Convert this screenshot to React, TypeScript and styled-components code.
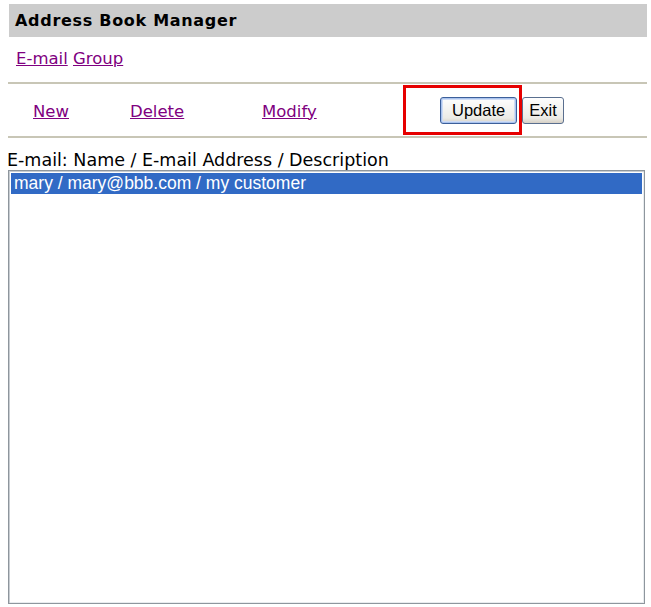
import React from "react";
import styled, { createGlobalStyle } from "styled-components";

const GlobalStyle = createGlobalStyle`
  html, body {
    margin: 0;
    padding: 0;
    background: #ffffff;
  }
  body {
    font-family: "DejaVu Sans", Verdana, sans-serif;
    color: #000000;
  }
`;

const entries = ["mary / mary@bbb.com / my customer"];

export default function App() {
  return (
    <>
      <GlobalStyle />
      <Page>
        <TitleBar>Address Book Manager</TitleBar>
        <NavLinks>
          <Link href="#">E-mail</Link> <Link href="#">Group</Link>
        </NavLinks>
        <Divider />
        <Toolbar>
          <ActionCell>
            <Link href="#">New</Link>
          </ActionCell>
          <ActionCell $width={132}>
            <Link href="#">Delete</Link>
          </ActionCell>
          <ActionCell $width={178}>
            <Link href="#">Modify</Link>
          </ActionCell>
          <ButtonGroup>
            <PushButton $primary>Update</PushButton>
            <PushButton>Exit</PushButton>
          </ButtonGroup>
          <Highlight />
        </Toolbar>
        <Divider />
        <ListLabel>E-mail: Name / E-mail Address / Description</ListLabel>
        <ListBox>
          {entries.map((e, i) => (
            <ListOption key={e} $selected={i === 0}>
              {e}
            </ListOption>
          ))}
        </ListBox>
      </Page>
    </>
  );
}

const Page = styled.div`
  padding: 4px 4px 0 8px;
  width: 639px;
  display: flex;
  flex-direction: column;
`;

const TitleBar = styled.div`
  background: #cccccc;
  height: 33px;
  margin-left: 1px;
  padding-left: 6px;
  display: flex;
  align-items: center;
  font-weight: bold;
  font-size: 16px;
  letter-spacing: 0.7px;
`;

const NavLinks = styled.div`
  padding: 12px 0 0 8px;
  height: 45px;
  box-sizing: border-box;
  font-size: 16.5px;
  line-height: 20px;
`;

const Link = styled.a`
  color: #800080;
  text-decoration: underline;
  &:hover {
    color: #a020a0;
  }
`;

const Divider = styled.div`
  height: 2px;
  background: #c8c6b6;
`;

const Toolbar = styled.div`
  position: relative;
  display: flex;
  align-items: center;
  height: 52px;
  padding-left: 25px;
  font-size: 16.5px;
`;

const ActionCell = styled.div<{ $width?: number }>`
  width: ${({ $width }) => $width ?? 97}px;
  padding-top: 2px;
`;

const ButtonGroup = styled.div`
  display: flex;
  gap: 5px;
`;

const PushButton = styled.button<{ $primary?: boolean }>`
  font-family: "Liberation Sans", Arial, sans-serif;
  font-size: 16.5px;
  height: 27px;
  padding: 0 ${({ $primary }) => ($primary ? 11 : 6)}px;
  border-radius: 3px;
  border: 1px solid ${({ $primary }) => ($primary ? "#3c5f9a" : "#5a6f8f")};
  background: linear-gradient(#fefefe, #ecebe6 80%, #d6d0c5);
  box-shadow: ${({ $primary }) =>
    $primary ? "inset 0 0 0 1px #a9c3ee, inset 0 0 0 2px #cfdcf4" : "none"};
  color: #000000;
  cursor: pointer;
`;

const Highlight = styled.div`
  position: absolute;
  left: 395px;
  top: 1px;
  width: 113px;
  height: 44px;
  border: 3px solid #e60000;
  pointer-events: none;
`;

const ListLabel = styled.div`
  font-size: 17.5px;
  padding-top: 12px;
  height: 20px;
  line-height: 20px;
  margin-left: -1px;
`;

const ListBox = styled.div`
  box-sizing: border-box;
  height: 434px;
  border: 1px solid #8e969d;
  box-shadow: inset 1px 1px 0 #c8cdd2, inset -1px -1px 0 #e8ecef;
  padding: 2px;
  background: #ffffff;
  margin-right: 2px;
`;

const ListOption = styled.div<{ $selected?: boolean }>`
  font-family: "Liberation Sans", Arial, sans-serif;
  font-size: 17.5px;
  height: 21px;
  line-height: 21px;
  padding-left: 3px;
  background: ${({ $selected }) => ($selected ? "#316ac5" : "transparent")};
  color: ${({ $selected }) => ($selected ? "#ffffff" : "#000000")};
`;
